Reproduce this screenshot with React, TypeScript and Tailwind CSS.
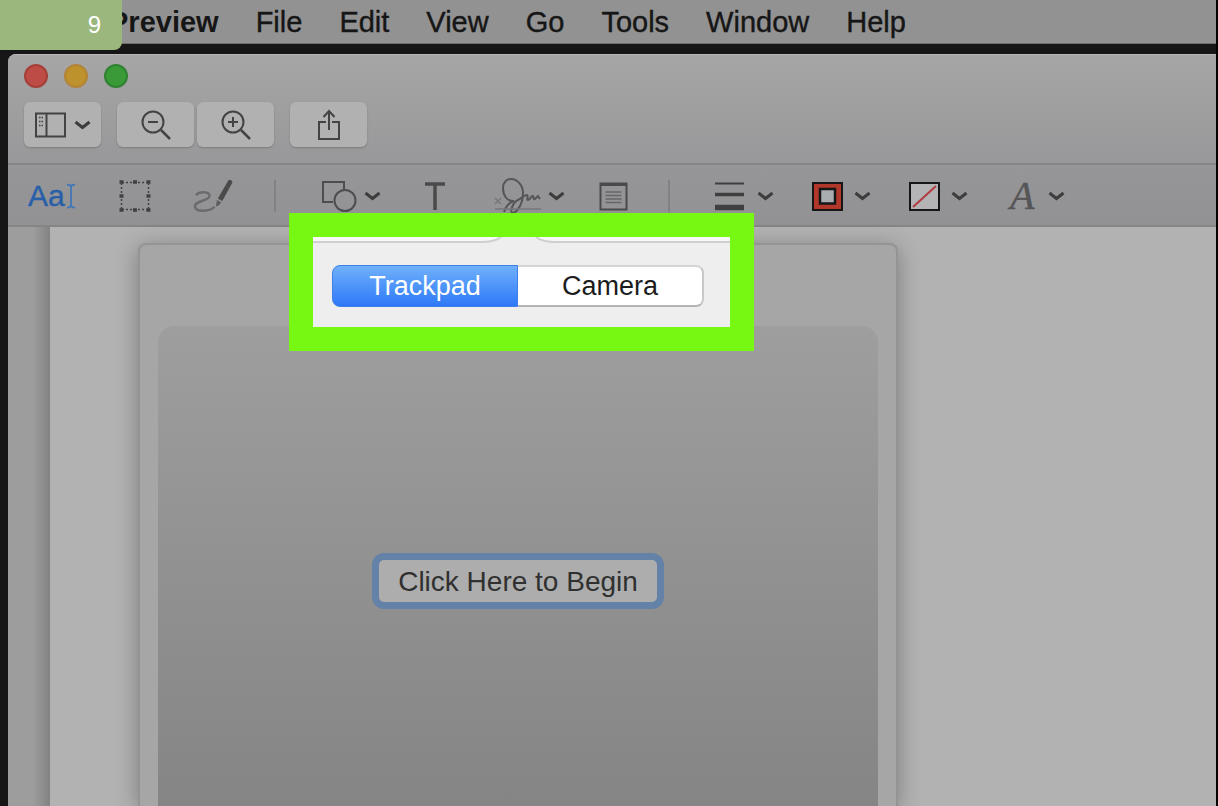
import React, { useState } from "react";

const menus = ["File", "Edit", "View", "Go", "Tools", "Window", "Help"];

export default function App() {
  const [source, setSource] = useState("trackpad");

  return (
    <div className="flex min-h-screen flex-col overflow-hidden border-r-2 border-black bg-[#161616] font-['Liberation_Sans',Arial,sans-serif]">
      <nav className="relative flex h-[44px] items-center gap-[37px] border-b border-[#6f6f6f] bg-[#929292] pt-0.5 pl-[109px] text-[29px] leading-none text-[#161616]">
        <button type="button" className="font-bold">Preview</button>
        {menus.map(m => (
          <button key={m} type="button" className="[-webkit-text-stroke:0.4px_#161616]">{m}</button>
        ))}
        <div className="absolute top-0 left-0 z-20 flex h-[50px] w-[122px] items-center justify-end rounded-br-lg bg-[#9bb77d] pr-[21px] text-2xl leading-none text-white">
          9
        </div>
      </nav>

      <main className="mt-[10px] ml-2 flex flex-1 flex-col overflow-hidden rounded-tl-lg bg-[#b2b2b2]">
        <header className="border-t border-b-2 border-t-[#b8b8b8] border-b-[#858587] bg-linear-to-b from-[#a6a6a6] to-[#98989a] px-4 pt-[9px] pb-4">
          <div className="flex gap-4">
            <button type="button" aria-label="Close" className="size-6 rounded-full border-2 border-[#a53f38] bg-[#bd4c46]" />
            <button type="button" aria-label="Minimize" className="size-6 rounded-full border-2 border-[#b38336] bg-[#bd912c]" />
            <button type="button" aria-label="Zoom" className="size-6 rounded-full border-2 border-[#2e8230] bg-[#3b9a38]" />
          </div>
          <div className="mt-[14px] flex gap-4">
            <TitleButton label="Sidebar">
              <SidebarIcon />
              <Chevron />
            </TitleButton>
            <div className="flex gap-[3px]">
              <TitleButton label="Zoom out"><Magnifier /></TitleButton>
              <TitleButton label="Zoom in"><Magnifier plus /></TitleButton>
            </div>
            <TitleButton label="Share"><ShareIcon /></TitleButton>
          </div>
        </header>

        <div className="flex h-[62px] items-center border-b-2 border-[#858587] bg-linear-to-b from-[#969698] to-[#929295] pt-0.5 pl-5 text-[#4a4a4a]">
          <div className="flex items-center gap-[41px]">
            <Tool label="Text selection" className="w-12">
              <span className="text-3xl leading-none text-[#285fa8] [-webkit-text-stroke:0.4px_#285fa8]">Aa</span>
              <CursorIcon />
            </Tool>
            <Tool label="Rectangular selection" className="w-[35px]"><MarqueeIcon /></Tool>
            <Tool label="Sketch" className="w-[41px]"><SketchIcon /></Tool>
          </div>
          <Divider />
          <div className="flex items-center gap-[34px]">
            <Tool label="Shapes" className="w-[60px]"><ShapesIcon /><Chevron /></Tool>
            <Tool label="Text" className="w-[39px]"><TextIcon /></Tool>
            <Tool label="Sign" className="w-[77px] pl-[6px]"><SignIcon /><Chevron /></Tool>
            <Tool label="Note" className="w-[29px]"><NoteIcon /></Tool>
          </div>
          <Divider />
          <div className="flex items-center gap-[38px]">
            <Tool label="Shape style" className="w-[59px]"><LinesIcon /><Chevron /></Tool>
            <Tool label="Border color" className="w-[59px]"><BorderColorIcon /><Chevron /></Tool>
            <Tool label="Fill color" className="w-[59px]"><FillColorIcon /><Chevron /></Tool>
            <Tool label="Text style" className="w-[59px] pl-1">
              <span className="font-['Liberation_Serif',serif] text-[40px] leading-none text-[#555557] italic [-webkit-text-stroke:0.5px_#555557]">A</span>
              <Chevron />
            </Tool>
          </div>
        </div>

        <div className="flex flex-1">
          <aside className="w-[42px] shrink-0 bg-linear-to-r from-[#9d9d9d] from-60% to-[#828282]" />
          <div className="flex flex-1 pt-4 pl-[88px]">
            <section className="relative flex w-full max-w-[760px] flex-col rounded-t-lg border-2 border-b-0 border-[#949494] bg-[#a6a6a6] px-[18px] pt-[81px] shadow-[0_4px_22px_rgba(0,0,0,0.3)]">
              <Highlight>
                <SourceTab active={source === "trackpad"} onClick={() => setSource("trackpad")}>Trackpad</SourceTab>
                <SourceTab active={source === "camera"} onClick={() => setSource("camera")}>Camera</SourceTab>
              </Highlight>
              <div className="flex flex-1 flex-col items-center rounded-t-2xl bg-linear-to-b from-[#9e9e9e] to-[#858585] px-4 pt-[227px]">
                <button
                  type="button"
                  className="rounded-xl border-[7px] border-[#6482a8] bg-[#adadad] px-[19px] pt-2 pb-1.5 text-[28px] leading-7 text-[#303030]"
                >
                  Click Here to Begin
                </button>
              </div>
            </section>
          </div>
        </div>
      </main>
    </div>
  );
}

function TitleButton({ label, children }: { label: string; children: React.ReactNode }) {
  return (
    <button
      type="button"
      aria-label={label}
      className="flex h-[45px] w-[77px] items-center justify-center gap-2 rounded-md bg-[#b1b1b1] text-[#434343] shadow-[0_1px_2px_rgba(0,0,0,0.2)]"
    >
      {children}
    </button>
  );
}

function Tool({ label, className, children }: { label: string; className: string; children: React.ReactNode }) {
  const many = React.Children.count(children) > 1;
  return (
    <button
      type="button"
      aria-label={label}
      className={`flex shrink-0 items-center ${many ? "justify-between" : "justify-center"} ${className}`}
    >
      {children}
    </button>
  );
}

function Divider() {
  return <span className="mr-[45px] ml-10 h-8 w-[2px] shrink-0 bg-[#818184]" />;
}

// Green callout laid over the top of the signature popover
function Highlight({ children }: { children: React.ReactNode }) {
  return (
    <div className="absolute top-[-32px] left-[149px] z-10 w-[465px] border-24 border-[#77f812] bg-[#eeeeee]">
      <svg viewBox="0 0 417 8" className="block h-2 w-full" preserveAspectRatio="none" aria-hidden="true">
        <path d="M0 0H417V4H240Q230 4 224 0H187Q181 4 171 4H0Z" fill="#f8f8f8" />
        <path d="M0 5H168Q182 5 188 0M223 0Q229 5 243 5H417" fill="none" stroke="#cfcfcf" strokeWidth="2" />
      </svg>
      <div className="flex pt-5 pr-[26px] pb-5 pl-[19px]">{children}</div>
    </div>
  );
}

function SourceTab({ active, onClick, children }: { active: boolean; onClick: () => void; children: React.ReactNode }) {
  return (
    <button
      type="button"
      aria-pressed={active}
      onClick={onClick}
      className={`h-[42px] flex-1 border text-[27px] leading-none first:rounded-l-lg last:rounded-r-lg ${
        active
          ? "border-[#3f7fe8] bg-linear-to-b from-[#6fb0fa] to-[#2e78f7] text-white"
          : "border-2 border-x-[#c8c8c8] border-t-[#d5d5d5] border-b-[#b4b4b4] bg-white text-[#1c1c1c] first:border-r-0 last:border-l-0"
      }`}
    >
      {children}
    </button>
  );
}

function Chevron() {
  return (
    <svg width="17" height="10" viewBox="0 0 17 10" fill="none" stroke="#3d3d3d" strokeWidth="3" aria-hidden="true">
      <path d="M1.5 2L8.5 7.5L15.5 2" />
    </svg>
  );
}

function SidebarIcon() {
  return (
    <svg width="31" height="26" viewBox="0 0 31 26" fill="none" stroke="currentColor" strokeWidth="2" aria-hidden="true">
      <path d="M1 1.5H30V24.5H1ZM11.5 1V25" />
      <path d="M4 5.5H9M4 9.5H9M4 13.5H9" strokeWidth="1.5" strokeDasharray="1.5 1" />
    </svg>
  );
}

function Magnifier({ plus }: { plus?: boolean }) {
  return (
    <svg width="32" height="32" viewBox="0 0 32 32" fill="none" stroke="currentColor" strokeWidth="2" aria-hidden="true">
      <circle cx="13" cy="13" r="10.5" />
      <path d="M8 13H18" />
      {plus && <path d="M13 8V18" />}
      <path d="M21 21L30 30" strokeWidth="2.5" />
    </svg>
  );
}

function ShareIcon() {
  return (
    <svg width="24" height="32" viewBox="0 0 24 32" fill="none" stroke="currentColor" strokeWidth="2" aria-hidden="true">
      <path d="M9 13H2V30H22V13H15" />
      <path d="M12 21V2M6.5 8L12 2L17.5 8" />
    </svg>
  );
}

function CursorIcon() {
  return (
    <svg width="10" height="26" viewBox="0 0 10 26" fill="none" stroke="#3f76b8" strokeWidth="1.75" aria-hidden="true">
      <path d="M1 1.5Q5 1.5 5 4Q5 1.5 9 1.5M5 4V22M1 24.5Q5 24.5 5 22Q5 24.5 9 24.5" />
    </svg>
  );
}

function MarqueeIcon() {
  return (
    <svg width="34" height="34" viewBox="0 0 34 34" fill="none" stroke="#414141" aria-hidden="true">
      <path d="M4 3.5H30M4 30.5H30M3.5 4V30M30.5 4V30" strokeWidth="1.5" strokeDasharray="2 2" />
      <path
        d="M1.5 3H5.5M15 3H19M28.5 3H32.5M1.5 17H5.5M28.5 17H32.5M1.5 31H5.5M15 31H19M28.5 31H32.5"
        strokeWidth="3.5"
      />
    </svg>
  );
}

function SketchIcon() {
  return (
    <svg width="42" height="36" viewBox="0 0 42 36" fill="none" aria-hidden="true">
      <path
        d="M3 17C7 13 17 13 17 18C17 23 1 23 2 29C3 35 18 34 22 29"
        stroke="#6b6b6d"
        strokeWidth="2.5"
      />
      <path d="M36.5 1.5Q40 1 40.5 4L30 23L25.5 20.5Z" fill="#4a4a4a" />
      <path d="M24.5 22L29 24.5L26 28L23.5 28.5Z" fill="#5c5c5c" />
    </svg>
  );
}

function ShapesIcon() {
  return (
    <svg width="36" height="32" viewBox="0 0 36 32" fill="none" stroke="#4d4d4f" strokeWidth="2" aria-hidden="true">
      <path d="M12 22H2V2H23V10" />
      <circle cx="24" cy="20.5" r="10.5" />
    </svg>
  );
}

function TextIcon() {
  return (
    <svg width="22" height="28" viewBox="0 0 22 28" fill="none" stroke="currentColor" strokeWidth="3.5" aria-hidden="true">
      <path d="M1 2H21M11 2V28" />
    </svg>
  );
}

function SignIcon() {
  return (
    <svg width="48" height="36" viewBox="0 0 48 36" fill="none" stroke="#555557" strokeWidth="2" aria-hidden="true">
      <path d="M20 23C13 24 9 17 9 10C9 4 13 1 17 1C24 1 29 8 29 15C29 26 23 35 18 35C16 33 19 24 24 22C28 20 30 17 33 17C35 18 32 22 34 22C37 22 37 17 39 18C40 19 39 22 41 21L44 18L46 21" />
      <path d="M20 23C15 24 11 30 10 34" />
      <path d="M1 20L7 26M7 20L1 26M1 31H47" stroke="#77777a" strokeWidth="1.5" />
    </svg>
  );
}

function NoteIcon() {
  return (
    <svg width="29" height="29" viewBox="0 0 29 29" fill="none" stroke="currentColor" strokeWidth="2" aria-hidden="true">
      <path d="M1.5 1.5H27.5V27.5H1.5Z" />
      <path d="M1 2.5H28" strokeWidth="3" />
      <path d="M6.5 10H22.5M6.5 13.5H22.5M6.5 17H22.5M6.5 20.5H22.5" stroke="#666668" strokeWidth="1.5" />
    </svg>
  );
}

function LinesIcon() {
  return (
    <svg width="29" height="30" viewBox="0 0 29 30" stroke="#3f3f3f" aria-hidden="true">
      <path d="M0 2.5H29" strokeWidth="2" />
      <path d="M0 13.5H29" strokeWidth="3.5" />
      <path d="M0 26.5H29" strokeWidth="5.5" />
    </svg>
  );
}

function BorderColorIcon() {
  return (
    <svg width="31" height="29" viewBox="0 0 31 29" fill="none" aria-hidden="true">
      <path d="M1 1H30V28H1Z" fill="#b1372b" stroke="#161616" strokeWidth="2" />
      <path d="M8 7H23V21.5H8Z" fill="#a9adb0" stroke="#161616" strokeWidth="2.5" />
    </svg>
  );
}

function FillColorIcon() {
  return (
    <svg width="31" height="29" viewBox="0 0 31 29" fill="none" aria-hidden="true">
      <path d="M1 1H30V28H1Z" fill="#b4b4b6" stroke="#161616" strokeWidth="2" />
      <path d="M4 25L27 4" stroke="#b23a40" strokeWidth="2" />
    </svg>
  );
}
